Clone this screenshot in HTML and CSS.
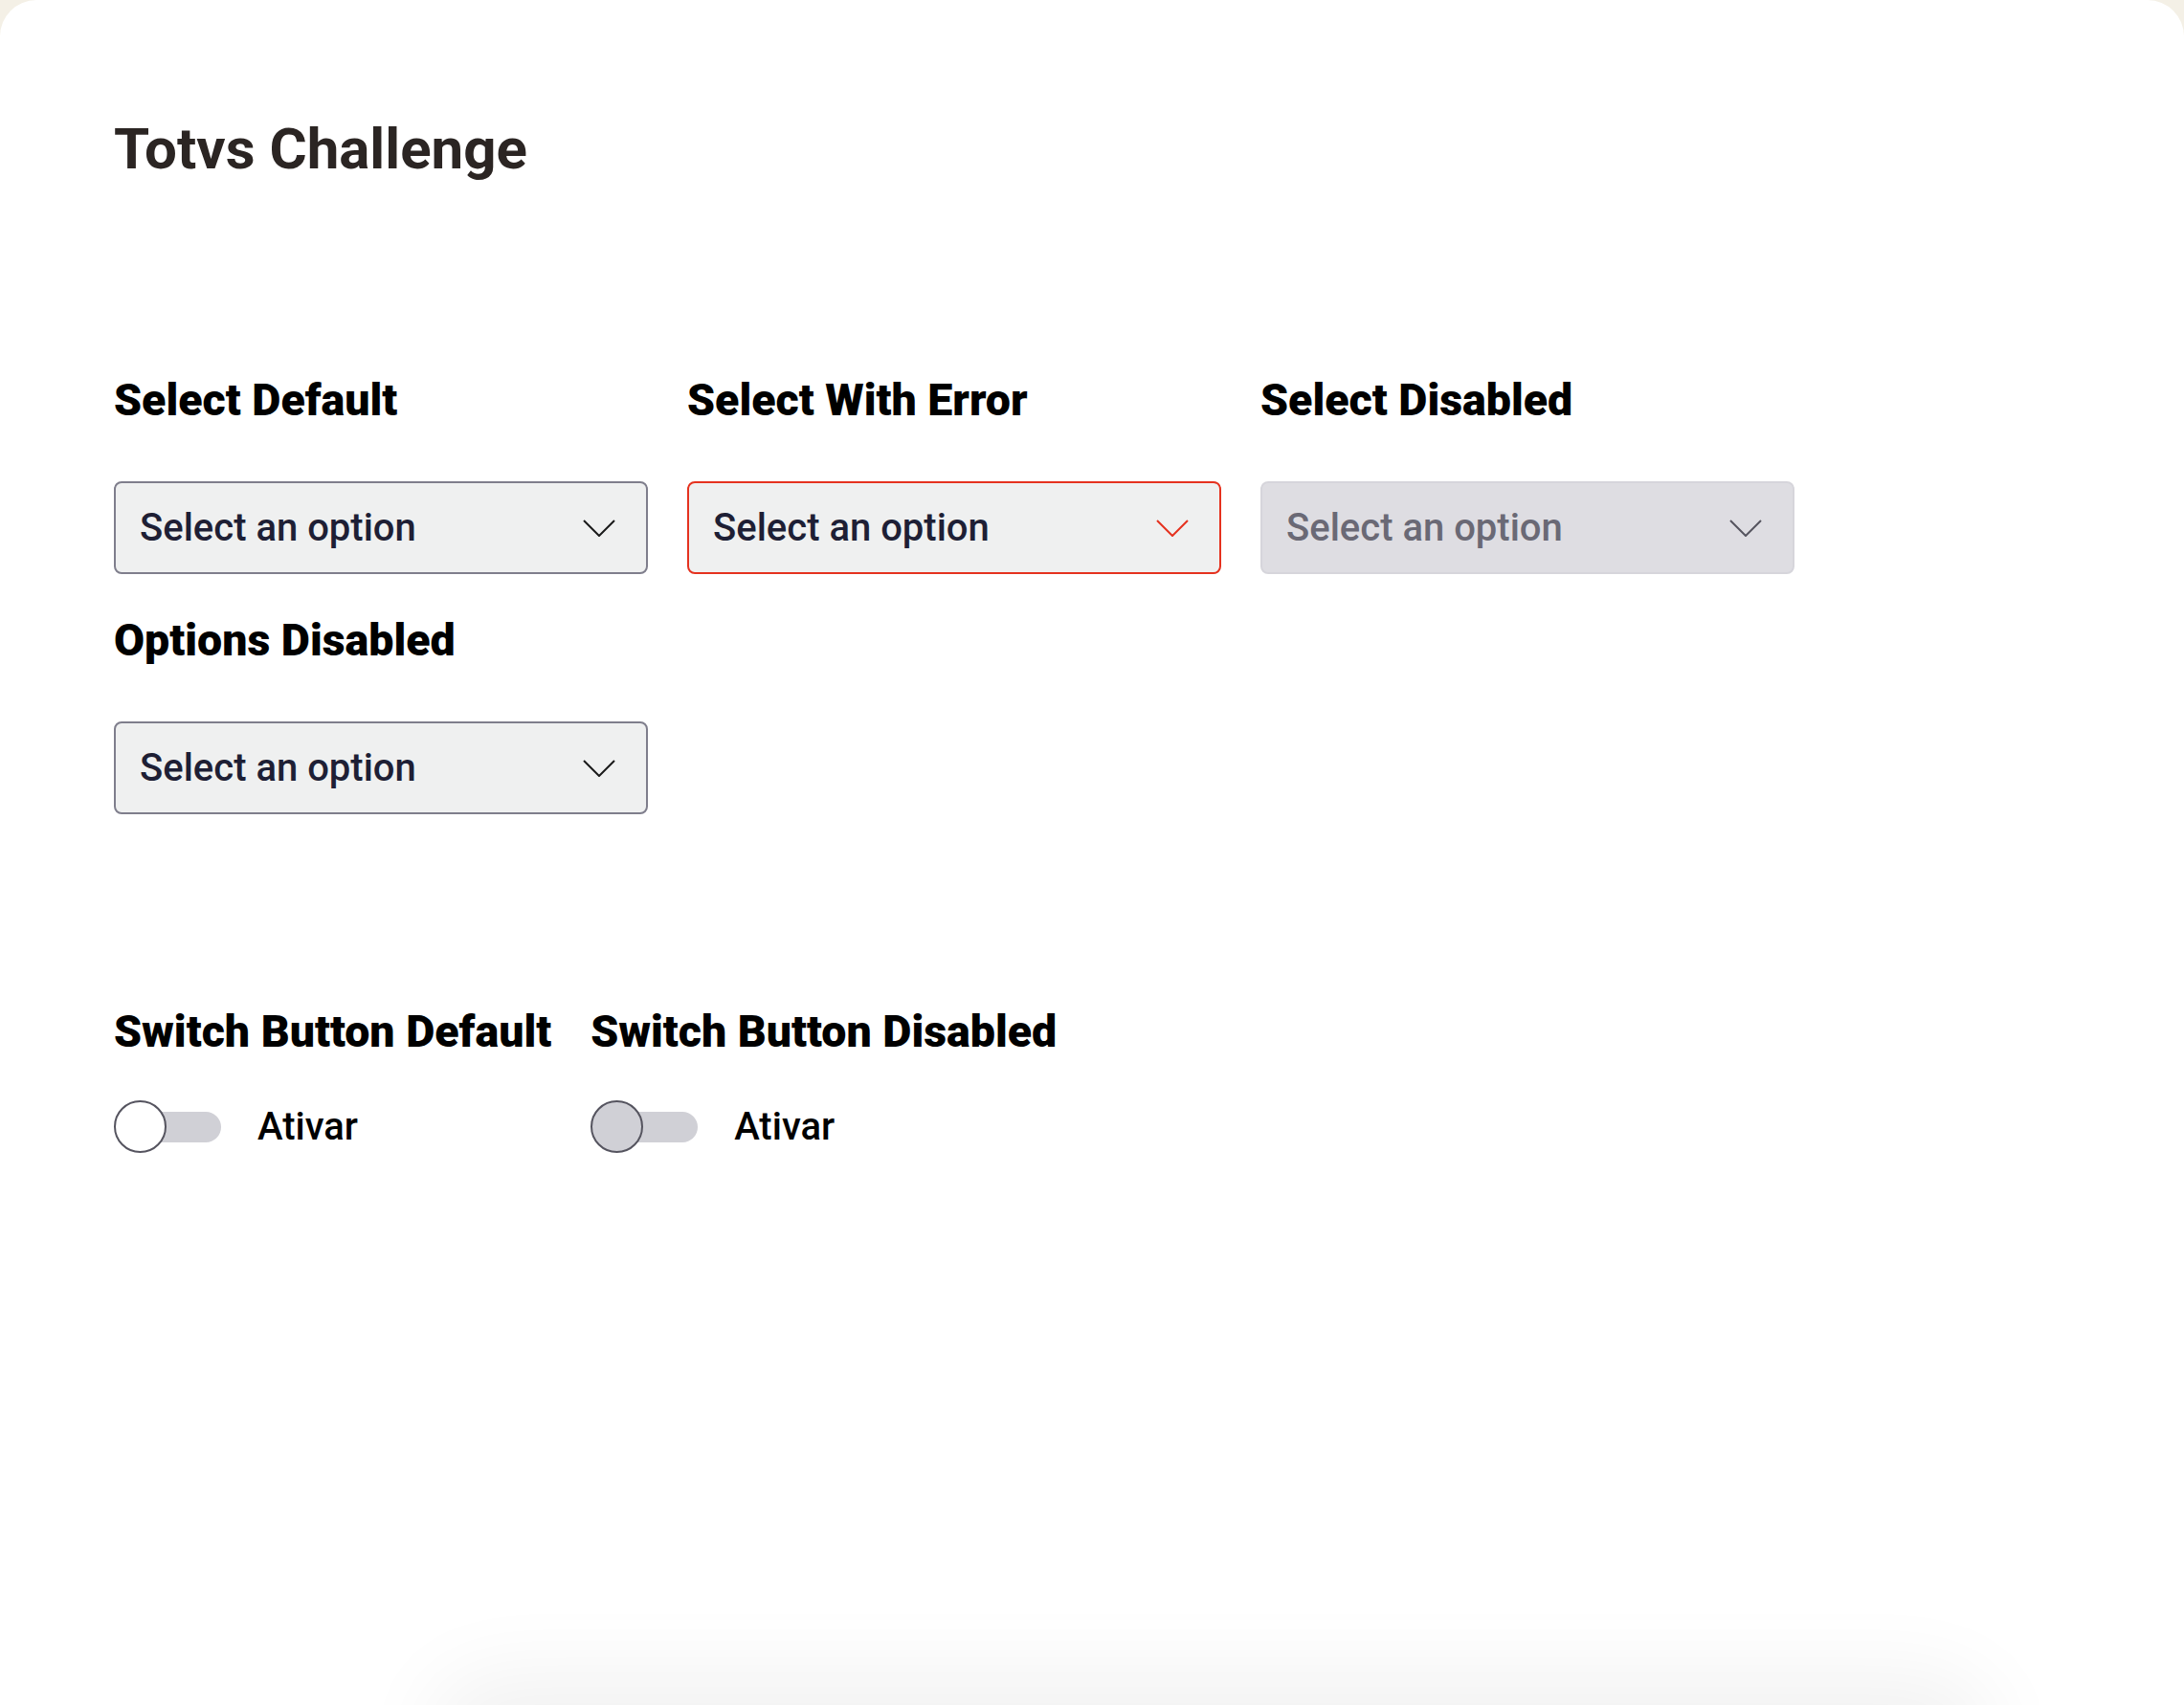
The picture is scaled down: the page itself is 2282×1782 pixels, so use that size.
FILE: index.html
```html
<!DOCTYPE html>
<html lang="pt-BR">
<head>
<meta charset="utf-8">
<title>Totvs Challenge</title>
<link rel="stylesheet" href="styles.css">
</head>
<body>
<main class="panel">
  <h1 class="title">Totvs Challenge</h1>

  <section class="selects">
    <div class="field">
      <h2 class="label">Select Default</h2>
      <div class="select">
        <span class="select-text">Select an option</span>
        <svg class="chevron" width="34" height="18" viewBox="0 0 34 18"><polyline points="1,1 17,17 33,1" fill="none" stroke="currentColor" stroke-width="2"/></svg>
      </div>
    </div>
    <div class="field">
      <h2 class="label">Select With Error</h2>
      <div class="select select-error">
        <span class="select-text">Select an option</span>
        <svg class="chevron" width="34" height="18" viewBox="0 0 34 18"><polyline points="1,1 17,17 33,1" fill="none" stroke="currentColor" stroke-width="2"/></svg>
      </div>
    </div>
    <div class="field">
      <h2 class="label">Select Disabled</h2>
      <div class="select select-disabled">
        <span class="select-text">Select an option</span>
        <svg class="chevron" width="34" height="18" viewBox="0 0 34 18"><polyline points="1,1 17,17 33,1" fill="none" stroke="currentColor" stroke-width="2"/></svg>
      </div>
    </div>
    <div class="field">
      <h2 class="label">Options Disabled</h2>
      <div class="select">
        <span class="select-text">Select an option</span>
        <svg class="chevron" width="34" height="18" viewBox="0 0 34 18"><polyline points="1,1 17,17 33,1" fill="none" stroke="currentColor" stroke-width="2"/></svg>
      </div>
    </div>
  </section>

  <section class="switches">
    <div class="switch-field">
      <h2 class="label">Switch Button Default</h2>
      <div class="switch-row">
        <div class="switch"><span class="knob"></span></div>
        <span class="switch-text">Ativar</span>
      </div>
    </div>
    <div class="switch-field">
      <h2 class="label">Switch Button Disabled</h2>
      <div class="switch-row">
        <div class="switch switch-disabled"><span class="knob"></span></div>
        <span class="switch-text">Ativar</span>
      </div>
    </div>
  </section>
</main>
</body>
</html>
```

FILE: styles.css
```css
* { box-sizing: border-box; }

html, body {
  margin: 0;
  height: 100%;
}

body {
  background: #f4f0e6;
  font-family: Roboto, "Liberation Sans", sans-serif;
  overflow: hidden;
  position: relative;
}

body::after {
  content: "";
  position: fixed;
  left: 480px;
  right: 230px;
  bottom: -70px;
  height: 70px;
  border-radius: 70px;
  background: #ececec;
  box-shadow: 0 0 90px 30px rgba(0, 0, 0, 0.06);
}

.panel {
  background: #ffffff;
  border-radius: 38px 38px 0 0;
  min-height: 100%;
  padding: 120px 0 0 119px;
}

.title {
  margin: 0;
  font-size: 60px;
  font-weight: 700;
  line-height: normal;
  color: #2b2523;
}

.label {
  margin: 0;
  font-size: 46.5px;
  font-weight: 900;
  line-height: 48px;
  color: #000000;
  white-space: nowrap;
}

.selects {
  margin-top: 203px;
  display: grid;
  grid-template-columns: repeat(3, 558px);
  column-gap: 41px;
  row-gap: 45px;
}

.field .label {
  margin-bottom: 61px;
}

.select {
  height: 97px;
  border: 2px solid #7f7e8c;
  border-radius: 8px;
  background: #eff0f0;
  display: flex;
  align-items: center;
  justify-content: space-between;
  padding: 0 32px 0 25px;
  color: #1e1f35;
}

.select-text {
  font-size: 40px;
  font-weight: 500;
}

.chevron {
  color: #1a1a1a;
  display: block;
}

.select-error {
  border-color: #e5321f;
}

.select-error .chevron {
  color: #e5321f;
}

.select-disabled {
  background: #dedde2;
  border-color: #d6d5db;
  color: #6a6975;
}

.select-disabled .chevron {
  color: #55545f;
}

.switches {
  margin-top: 203px;
  display: flex;
  gap: 41px;
}

.switch-row {
  margin-top: 48px;
  display: flex;
  align-items: center;
  gap: 38px;
}

.switch {
  position: relative;
  width: 112px;
  height: 55px;
  display: flex;
  align-items: center;
}

.switch::before {
  content: "";
  display: block;
  margin-left: 8px;
  width: 104px;
  height: 32px;
  border-radius: 16px;
  background: #d0d0d6;
}

.knob {
  position: absolute;
  left: 0;
  top: 0;
  width: 55px;
  height: 55px;
  border-radius: 50%;
  border: 2px solid #55545f;
  background: #ffffff;
}

.switch-disabled .knob {
  background: #d0d0d6;
}

.switch-text {
  font-size: 40px;
  font-weight: 500;
  color: #000000;
}
```
